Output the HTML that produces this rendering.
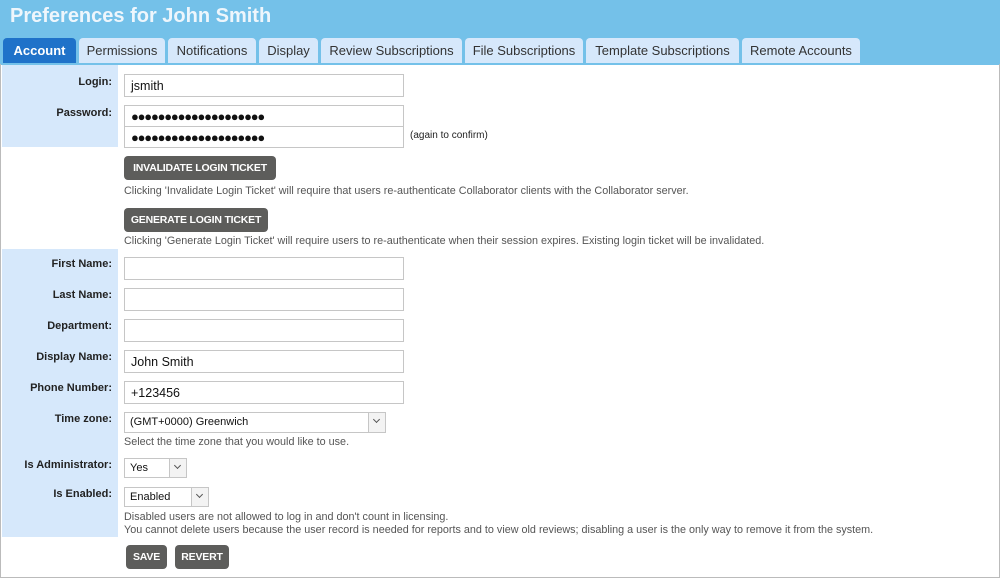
<!DOCTYPE html>
<html><head><style>
*{margin:0;padding:0;box-sizing:border-box}
body{width:1000px;height:578px;background:#fff;font-family:"Liberation Sans",Arial,sans-serif;position:relative;overflow:hidden}
.a{position:absolute}
.hdr{left:0;top:0;width:1000px;height:65px;background:#74c1e9}
.title{left:10px;top:5px;font-size:20px;font-weight:bold;color:#eef6fc}
.tab{top:38px;height:25px;background:#d6e8fb;border-radius:4px 4px 0 0;font-size:13px;color:#333;text-align:center;line-height:25px}
.tab.on{background:#1f72c9;color:#fff;font-weight:bold}
.box{left:0;top:64px;width:1000px;height:514px;border:1px solid #bbb;border-top:none}
.lab{left:2px;width:116px;background:#d6e8fb}
.l{right:888px;font-size:11px;font-weight:bold;color:#222;text-align:right}
.in{left:124px;width:280px;height:23px;border:1px solid #c6c6c6;background:#fff;font-size:12.5px;padding-left:6px;line-height:23px;color:#111}
.btn{background:#5d5d5b;color:#fff;font-size:10.5px;font-weight:bold;border-radius:4px;text-align:center;line-height:24px;height:24px;letter-spacing:-0.2px}
.hint{left:124px;font-size:10.8px;color:#555}
.sel{left:124px;border:1px solid #c6c6c6;font-size:11px;color:#111;padding-left:5px;background:#fff}
.arr{position:absolute;right:0;top:0;bottom:0;width:17px;border-left:1px solid #c6c6c6;background:#f3f3f3}
.arr:after{content:"";position:absolute;left:5px;top:4px;width:4px;height:4px;border-right:1px solid #555;border-bottom:1px solid #555;transform:rotate(45deg)}
.pw{font-size:13px;letter-spacing:-1.2px;line-height:21px}
</style></head><body>
<div class="a hdr"></div>
<div class="a title">Preferences for John Smith</div>
<div class="a tab on" style="left:3px;width:73px">Account</div>
<div class="a tab" style="left:79px;width:86px">Permissions</div>
<div class="a tab" style="left:168px;width:88px">Notifications</div>
<div class="a tab" style="left:259px;width:59px">Display</div>
<div class="a tab" style="left:321px;width:141px">Review Subscriptions</div>
<div class="a tab" style="left:465px;width:118px">File Subscriptions</div>
<div class="a tab" style="left:586px;width:153px">Template Subscriptions</div>
<div class="a tab" style="left:742px;width:118px">Remote Accounts</div>
<div class="a box"></div>
<div class="a lab" style="top:65px;height:82px"></div>
<div class="a lab" style="top:249px;height:288px"></div>

<div class="a l" style="top:76px">Login:</div>
<div class="a in" style="top:74px">jsmith</div>
<div class="a l" style="top:107px">Password:</div>
<div class="a in pw" style="top:105px;height:22px">●●●●●●●●●●●●●●●●●●●●</div>
<div class="a in pw" style="top:126px;height:22px">●●●●●●●●●●●●●●●●●●●●</div>
<div class="a" style="left:410px;top:130px;font-size:10px;color:#222">(again to confirm)</div>

<div class="a btn" style="left:124px;top:156px;width:152px">INVALIDATE LOGIN TICKET</div>
<div class="a hint" style="top:185px">Clicking 'Invalidate Login Ticket' will require that users re-authenticate Collaborator clients with the Collaborator server.</div>
<div class="a btn" style="left:124px;top:208px;width:144px">GENERATE LOGIN TICKET</div>
<div class="a hint" style="top:235px">Clicking 'Generate Login Ticket' will require users to re-authenticate when their session expires. Existing login ticket will be invalidated.</div>

<div class="a l" style="top:258px">First Name:</div><div class="a in" style="top:257px"></div>
<div class="a l" style="top:289px">Last Name:</div><div class="a in" style="top:288px"></div>
<div class="a l" style="top:320px">Department:</div><div class="a in" style="top:319px"></div>
<div class="a l" style="top:351px">Display Name:</div><div class="a in" style="top:350px">John Smith</div>
<div class="a l" style="top:382px">Phone Number:</div><div class="a in" style="top:381px">+123456</div>

<div class="a l" style="top:413px">Time zone:</div>
<div class="a sel" style="top:412px;width:262px;height:21px;line-height:19px">(GMT+0000) Greenwich<span class="arr"></span></div>
<div class="a hint" style="top:436px">Select the time zone that you would like to use.</div>
<div class="a l" style="top:459px">Is Administrator:</div>
<div class="a sel" style="top:458px;width:63px;height:20px;line-height:18px">Yes<span class="arr"></span></div>
<div class="a l" style="top:488px">Is Enabled:</div>
<div class="a sel" style="top:487px;width:85px;height:20px;line-height:18px">Enabled<span class="arr"></span></div>
<div class="a hint" style="top:511px;line-height:13px">Disabled users are not allowed to log in and don't count in licensing.<br>You cannot delete users because the user record is needed for reports and to view old reviews; disabling a user is the only way to remove it from the system.</div>

<div class="a btn" style="left:126px;top:545px;width:41px">SAVE</div>
<div class="a btn" style="left:175px;top:545px;width:54px">REVERT</div>
</body></html>
